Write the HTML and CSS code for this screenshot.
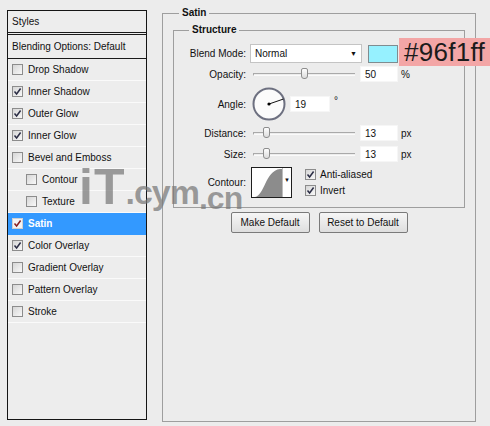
FILE: index.html
```html
<!DOCTYPE html>
<html>
<head>
<meta charset="utf-8">
<link rel="stylesheet" href="styles.css">
</head>
<body>
<div class="dialog">
  <div class="styles-panel">
    <div class="sp-head">Styles</div>
    <div class="sp-blend">Blending Options: Default</div>
    <ul class="sp-list">
      <li class="sp-item"><span class="cb"></span>Drop Shadow</li>
      <li class="sp-item"><span class="cb"><svg viewBox="0 0 9 9"><path d="M1.5 4.5 L3.6 7 L7.6 1.5" /></svg></span>Inner Shadow</li>
      <li class="sp-item"><span class="cb"><svg viewBox="0 0 9 9"><path d="M1.5 4.5 L3.6 7 L7.6 1.5" /></svg></span>Outer Glow</li>
      <li class="sp-item"><span class="cb"><svg viewBox="0 0 9 9"><path d="M1.5 4.5 L3.6 7 L7.6 1.5" /></svg></span>Inner Glow</li>
      <li class="sp-item"><span class="cb"></span>Bevel and Emboss</li>
      <li class="sp-item sub"><span class="cb"></span>Contour</li>
      <li class="sp-item sub"><span class="cb"></span>Texture</li>
      <li class="sp-item active"><span class="cb"><svg viewBox="0 0 9 9"><path d="M1.5 4.5 L3.6 7 L7.6 1.5" /></svg></span>Satin</li>
      <li class="sp-item"><span class="cb"><svg viewBox="0 0 9 9"><path d="M1.5 4.5 L3.6 7 L7.6 1.5" /></svg></span>Color Overlay</li>
      <li class="sp-item"><span class="cb"></span>Gradient Overlay</li>
      <li class="sp-item"><span class="cb"></span>Pattern Overlay</li>
      <li class="sp-item"><span class="cb"></span>Stroke</li>
    </ul>
  </div>

  <div class="main">
    <fieldset class="group outer">
      <legend>Satin</legend>
      <fieldset class="group inner">
        <legend class="inner-legend">Structure</legend>

        <div class="row row-blend">
          <span class="lbl">Blend Mode:</span>
          <div class="select"><span>Normal</span><span class="arrow">&#9660;</span></div>
          <span class="swatch"></span>
        </div>

        <div class="row row-opacity">
          <span class="lbl">Opacity:</span>
          <div class="slider"><span class="track"></span><span class="thumb" style="left:48px"></span></div>
          <span class="num">50</span>
          <span class="unit">%</span>
        </div>

        <div class="row row-angle">
          <span class="lbl">Angle:</span>
          <svg class="dial" width="34" height="34" viewBox="0 0 34 34">
            <circle cx="17" cy="17" r="15.5" fill="#fbfbfb" stroke="#6d7080" stroke-width="2"/>
            <line x1="17" y1="17" x2="31.5" y2="12" stroke="#111" stroke-width="1"/>
            <circle cx="17" cy="17" r="1.6" fill="#000"/>
          </svg>
          <span class="num num-angle">19</span>
          <span class="unit deg">&deg;</span>
        </div>

        <div class="row row-distance">
          <span class="lbl">Distance:</span>
          <div class="slider"><span class="track"></span><span class="thumb" style="left:10px"></span></div>
          <span class="num">13</span>
          <span class="unit">px</span>
        </div>

        <div class="row row-size">
          <span class="lbl">Size:</span>
          <div class="slider"><span class="track"></span><span class="thumb" style="left:10px"></span></div>
          <span class="num">13</span>
          <span class="unit">px</span>
        </div>

        <div class="row row-contour">
          <span class="lbl">Contour:</span>
          <div class="contour">
            <svg width="30" height="29" viewBox="0 0 30 29">
              <path d="M3 29 C 13 27, 13 3, 28 1 L 30 1 L 30 29 Z" fill="#8c8c8c"/>
            </svg>
            <span class="c-arrow">&#9660;</span>
          </div>
          <div class="checks">
            <div class="check"><span class="cb"><svg viewBox="0 0 9 9"><path d="M1.5 4.5 L3.6 7 L7.6 1.5" /></svg></span>Anti-aliased</div>
            <div class="check"><span class="cb"><svg viewBox="0 0 9 9"><path d="M1.5 4.5 L3.6 7 L7.6 1.5" /></svg></span>Invert</div>
          </div>
        </div>
      </fieldset>

      <div class="buttons">
        <button class="btn btn-make">Make Default</button>
        <button class="btn btn-reset">Reset to Default</button>
      </div>
    </fieldset>
  </div>
</div>

<div class="note">#96f1ff</div>
<div class="watermark"><span class="wm-big">iT</span><span class="wm-small">.cym</span><span class="wm-cn">.cn</span></div>
</body>
</html>
```

FILE: styles.css
```css
html, body {
  margin: 0;
  padding: 0;
}
body {
  width: 490px;
  height: 426px;
  overflow: hidden;
  position: relative;
  background: #ececec;
  font: 10px "Liberation Sans", Arial, sans-serif;
  color: #111;
}

.dialog {
  display: flex;
  align-items: flex-start;
  padding: 10px 0 0 7px;
}

/* ---- left styles list ---- */
.styles-panel {
  width: 140px;
  height: 410px;
  box-sizing: border-box;
  border: 1px solid #151515;
  background: #ededed;
}
.sp-head {
  height: 21px;
  line-height: 21px;
  padding-left: 4px;
  border-bottom: 3px double #1a1a1a;
}
.sp-blend {
  height: 23px;
  line-height: 23px;
  padding-left: 4px;
  border-bottom: 1px solid #1a1a1a;
}
.sp-list {
  list-style: none;
  margin: 0;
  padding: 0;
}
.sp-item {
  height: 21px;
  border-bottom: 1px solid #fafafa;
  display: flex;
  align-items: center;
  gap: 5px;
  padding-left: 4px;
}
.sp-item.sub {
  padding-left: 18px;
}
.sp-item.active {
  background: #3399ff;
  border-bottom-color: #3399ff;
  color: #fff;
  font-weight: bold;
}

.cb {
  width: 11px;
  height: 11px;
  box-sizing: border-box;
  border: 1px solid #8c8c8c;
  background: linear-gradient(135deg, #d6d6d6, #f8f8f8);
  display: inline-flex;
  align-items: center;
  justify-content: center;
  flex: none;
}
.cb svg {
  width: 9px;
  height: 9px;
}
.cb path {
  fill: none;
  stroke: #2b2d45;
  stroke-width: 1.5;
}
.sp-item.active .cb {
  background: #f4f4f4;
  border-color: #d0d0d0;
}
.sp-item.active .cb path {
  stroke: #8a2020;
}

/* ---- right side ---- */
.main {
  margin-left: 15px;
  margin-top: -3px;
}
.group {
  margin: 0;
  box-sizing: border-box;
  border: 1px solid #9e9e9e;
}
.group legend {
  font-weight: bold;
  line-height: 12px;
  padding: 0 3px;
  margin-left: 6px;
}
.outer {
  width: 314px;
  height: 415px;
  padding: 5px 10px 0 10px;
}
.inner {
  width: 292px;
  height: 184px;
  padding: 0;
}
.group .inner-legend {
  margin-left: 15px;
}

.row {
  display: flex;
  align-items: center;
}
.lbl {
  width: 72px;
  margin-right: 5px;
  text-align: right;
  flex: none;
}
.row-blend { height: 19px; margin-top: 8px; }
.row-opacity { height: 16px; margin-top: 3px; }
.row-angle { height: 34px; margin-top: 5px; }
.row-distance { height: 16px; margin-top: 4px; }
.row-size { height: 16px; margin-top: 5px; }
.row-contour { height: 31px; margin-top: 5px; }

.select {
  width: 112px;
  height: 19px;
  box-sizing: border-box;
  margin-left: -1px;
  border: 1px solid #c4c4c4;
  background: #fff;
  display: flex;
  align-items: center;
  justify-content: space-between;
  padding: 0 4px;
}
.select .arrow {
  font-size: 7px;
  color: #111;
}
.swatch {
  width: 30px;
  height: 18px;
  box-sizing: border-box;
  margin-left: 6px;
  border: 1px solid #7f8c90;
  background: #96f1ff;
}

.slider {
  width: 102px;
  height: 14px;
  margin-left: 2px;
  position: relative;
}
.track {
  position: absolute;
  left: 0;
  right: 0;
  top: 6px;
  height: 1px;
  border-top: 1px solid #a9a9a9;
  border-bottom: 1px solid #fafafa;
  border-left: 1px solid #a9a9a9;
}
.thumb {
  position: absolute;
  top: 1px;
  width: 7px;
  height: 11px;
  box-sizing: border-box;
  border: 1px solid #8d8d8d;
  border-radius: 2px 2px 3px 3px;
  background: linear-gradient(#fdfdfd, #dcdcdc);
}

.num {
  width: 38px;
  height: 16px;
  line-height: 16px;
  box-sizing: border-box;
  margin-left: 5px;
  padding-left: 4px;
  background: #fff;
  border: 1px solid #f6f6f6;
}
.unit {
  margin-left: 3px;
}
.dial {
  margin-left: 1px;
  flex: none;
}
.num-angle {
  width: 40px;
  margin-left: 4px;
}
.unit.deg {
  margin-left: 4px;
  align-self: flex-start;
  margin-top: 8px;
}

.contour {
  width: 41px;
  height: 31px;
  box-sizing: border-box;
  border: 1px solid #1e1e1e;
  background: #fff;
  display: flex;
}
.contour svg {
  display: block;
  border-right: 1px solid #bdbdbd;
}
.c-arrow {
  flex: 1;
  font-size: 6px;
  text-align: center;
  padding-top: 9px;
}
.checks {
  margin-left: 13px;
  display: flex;
  flex-direction: column;
  gap: 5px;
}
.check {
  display: flex;
  align-items: center;
  gap: 4px;
  height: 11px;
}

.buttons {
  display: flex;
  justify-content: center;
  gap: 9px;
  margin-top: 4px;
}
.btn {
  height: 21px;
  box-sizing: border-box;
  padding: 0;
  font: 10px "Liberation Sans", Arial, sans-serif;
  color: #111;
  border: 1px solid #7a7a7a;
  border-radius: 2px;
  background: linear-gradient(#f6f6f6, #dedede);
}
.btn-make { width: 79px; }
.btn-reset { width: 89px; }

/* ---- overlays ---- */
.note {
  position: absolute;
  left: 399px;
  top: 38px;
  width: 91px;
  height: 28px;
  box-sizing: border-box;
  padding-left: 5px;
  background: #f3a6a6;
  color: #1b1b1b;
  font: 26px/28px "Liberation Sans", Arial, sans-serif;
  letter-spacing: 0.3px;
}
.watermark {
  position: absolute;
  left: 79px;
  top: 158px;
  color: rgba(120, 120, 120, 0.72);
  font-family: "Liberation Sans", Arial, sans-serif;
  font-weight: bold;
  white-space: nowrap;
  pointer-events: none;
}
.wm-big {
  font-size: 50px;
  letter-spacing: 1px;
}
.wm-small {
  font-size: 34px;
  letter-spacing: -1px;
}
.wm-cn {
  font-size: 32px;
  letter-spacing: -1px;
  position: relative;
  top: 5px;
}
```
